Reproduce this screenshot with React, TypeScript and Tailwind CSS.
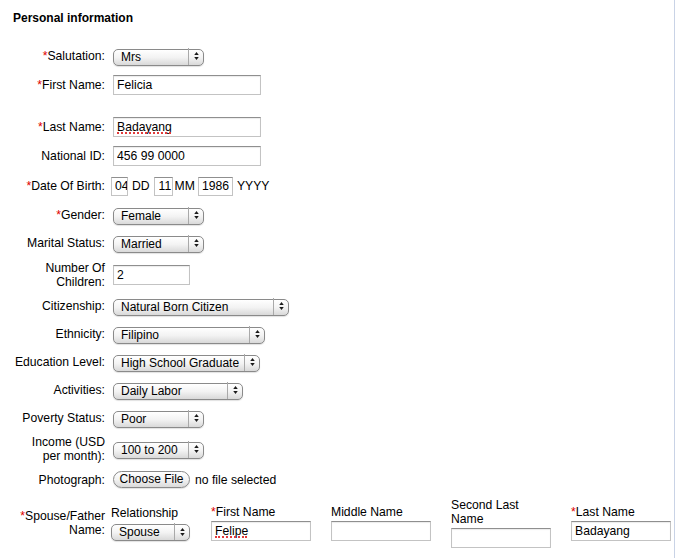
import type { ReactNode } from "react"

const font = "font-['Liberation_Sans',Arial,Helvetica,sans-serif]"

function Arrows() {
  return (
    <span className="pointer-events-none absolute right-0 top-0 bottom-0 flex w-[16px] flex-col items-center justify-center gap-[2px] border-l border-[#a9a9a9]">
      <svg width="5" height="3" viewBox="0 0 6 4" aria-hidden="true">
        <path d="M3 0L6 4H0Z" fill="#1a1a1a" />
      </svg>
      <svg width="5" height="3" viewBox="0 0 6 4" aria-hidden="true">
        <path d="M0 0H6L3 4Z" fill="#1a1a1a" />
      </svg>
    </span>
  )
}

function Select({ value, className }: { value: string; className: string }) {
  return (
    <div className={`relative h-[17px] ${className}`}>
      <select
        defaultValue={value}
        className="h-full w-full appearance-none rounded-[5px] border border-[#8a8a8a] bg-gradient-to-b from-white via-[#f3f3f3] to-[#d9d9d9] pl-[7px] pr-[18px] text-[12px] leading-[15px] text-black shadow-[0_1px_1px_rgba(0,0,0,0.12)] outline-none"
      >
        <option>{value}</option>
      </select>
      <Arrows />
    </div>
  )
}

function TextInput({ value = "", className, squiggle }: { value?: string; className: string; squiggle?: string }) {
  return (
    <div className={`relative h-[20px] ${className}`}>
      <input
        defaultValue={value}
        spellCheck={false}
        className="h-full w-full border border-[#c3c3c3] border-t-[#8f8f8f] bg-white px-[3px] text-[12.2px] text-black shadow-[inset_0_1px_1px_rgba(0,0,0,0.08)] outline-none"
      />
      {squiggle && (
        <span className={`pointer-events-none absolute left-[4px] top-[15px] h-0 border-b-2 border-dotted border-[#e23b3b] ${squiggle}`} />
      )}
    </div>
  )
}

function Req() {
  return <span className="text-[#e00000]">*</span>
}

function Row({
  label,
  required,
  h,
  children,
}: {
  label: ReactNode
  required?: boolean
  h: string
  children: ReactNode
}) {
  return (
    <div className={`flex items-center ${h}`}>
      <div className="w-[105px] text-right leading-[14px]">
        {required && <Req />}
        {label}
      </div>
      <div className="ml-[8px] flex items-center">{children}</div>
    </div>
  )
}

export default function App() {
  return (
    <div className={`min-h-screen w-[675px] border-r border-[#c9d3e6] bg-white text-[12.2px] text-black ${font}`}>
      <h2 className="pl-[13px] pt-[11px] text-[12px] font-bold leading-[14px]">Personal information</h2>

      <div className="mt-[17px] flex flex-col">
        <Row label="Salutation:" required h="h-[28px]">
          <Select value="Mrs" className="w-[91px]" />
        </Row>
        <Row label="First Name:" required h="h-[30px]">
          <TextInput value="Felicia" className="w-[148px]" />
        </Row>
        <div className="h-[12px]" />
        <Row label="Last Name:" required h="h-[30px]">
          <TextInput value="Badayang" className="w-[148px]" squiggle="w-[54px]" />
        </Row>
        <Row label="National ID:" h="h-[28px]">
          <TextInput value="456 99 0000" className="w-[148px]" />
        </Row>
        <Row label="Date Of Birth:" required h="h-[32px]">
          <div className="-ml-[2px] flex items-center">
            <input
              defaultValue="04"
              className="h-[19px] w-[17px] border border-[#c3c3c3] border-t-[#8f8f8f] pl-[3px] pr-0 text-[12.2px] outline-none"
            />
            <span className="ml-[4px] mr-[4px]">DD</span>
            <input
              defaultValue="11"
              className="h-[19px] w-[19px] border border-[#c3c3c3] border-t-[#8f8f8f] pl-[4px] pr-0 text-[12.2px] outline-none"
            />
            <span className="ml-[2px] mr-[3px]">MM</span>
            <input
              defaultValue="1986"
              className="h-[19px] w-[35px] border border-[#c3c3c3] border-t-[#8f8f8f] px-[3px] text-[12.2px] outline-none"
            />
            <span className="ml-[4px]">YYYY</span>
          </div>
        </Row>
        <Row label="Gender:" required h="h-[26px]">
          <Select value="Female" className="w-[91px]" />
        </Row>
        <Row label="Marital Status:" h="h-[30px]">
          <Select value="Married" className="w-[91px]" />
        </Row>
        <Row
          label={
            <>
              Number Of
              <br />
              Children:
            </>
          }
          h="h-[34px]"
        >
          <TextInput value="2" className="w-[77px]" />
        </Row>
        <Row label="Citizenship:" h="h-[28px]">
          <Select value="Natural Born Citizen" className="w-[176px]" />
        </Row>
        <Row label="Ethnicity:" h="h-[28px]">
          <Select value="Filipino" className="w-[152px]" />
        </Row>
        <Row label="Education Level:" h="h-[28px]">
          <Select value="High School Graduate" className="w-[147px]" />
        </Row>
        <Row label="Activities:" h="h-[28px]">
          <Select value="Daily Labor" className="w-[130px]" />
        </Row>
        <Row label="Poverty Status:" h="h-[28px]">
          <Select value="Poor" className="w-[91px]" />
        </Row>
        <Row
          label={
            <>
              Income (USD
              <br />
              per month):
            </>
          }
          h="h-[34px]"
        >
          <Select value="100 to 200" className="w-[91px]" />
        </Row>
        <Row label="Photograph:" h="h-[28px]">
          <button className="h-[17px] w-[77px] rounded-full border border-[#8a8a8a] bg-gradient-to-b from-white via-[#f3f3f3] to-[#dadada] text-[12px] leading-[15px] text-black shadow-[0_1px_1px_rgba(0,0,0,0.12)]">
            Choose File
          </button>
          <span className="ml-[5px]">no file selected</span>
        </Row>

        <div className="flex h-[58px] items-center">
          <div className="w-[105px] text-right leading-[14px]">
            <Req />
            Spouse/Father
            <br />
            Name:
          </div>
          <div className="ml-[6px] flex items-center">
            <div className="flex w-[100px] flex-col">
              <span className="mb-[3px] leading-[14px]">Relationship</span>
              <Select value="Spouse" className="w-[79px]" />
            </div>
            <div className="flex w-[120px] flex-col">
              <span className="mb-[2px] leading-[14px]">
                <Req />
                First Name
              </span>
              <TextInput value="Felipe" className="w-[100px]" squiggle="w-[32px]" />
            </div>
            <div className="flex w-[120px] flex-col">
              <span className="mb-[2px] leading-[14px]">Middle Name</span>
              <TextInput className="w-[100px]" />
            </div>
            <div className="flex w-[120px] flex-col">
              <span className="mb-[2px] leading-[14px]">
                Second Last
                <br />
                Name
              </span>
              <TextInput className="w-[100px]" />
            </div>
            <div className="flex w-[100px] flex-col">
              <span className="mb-[2px] leading-[14px]">
                <Req />
                Last Name
              </span>
              <TextInput value="Badayang" className="w-[100px]" />
            </div>
          </div>
        </div>
      </div>
    </div>
  )
}
